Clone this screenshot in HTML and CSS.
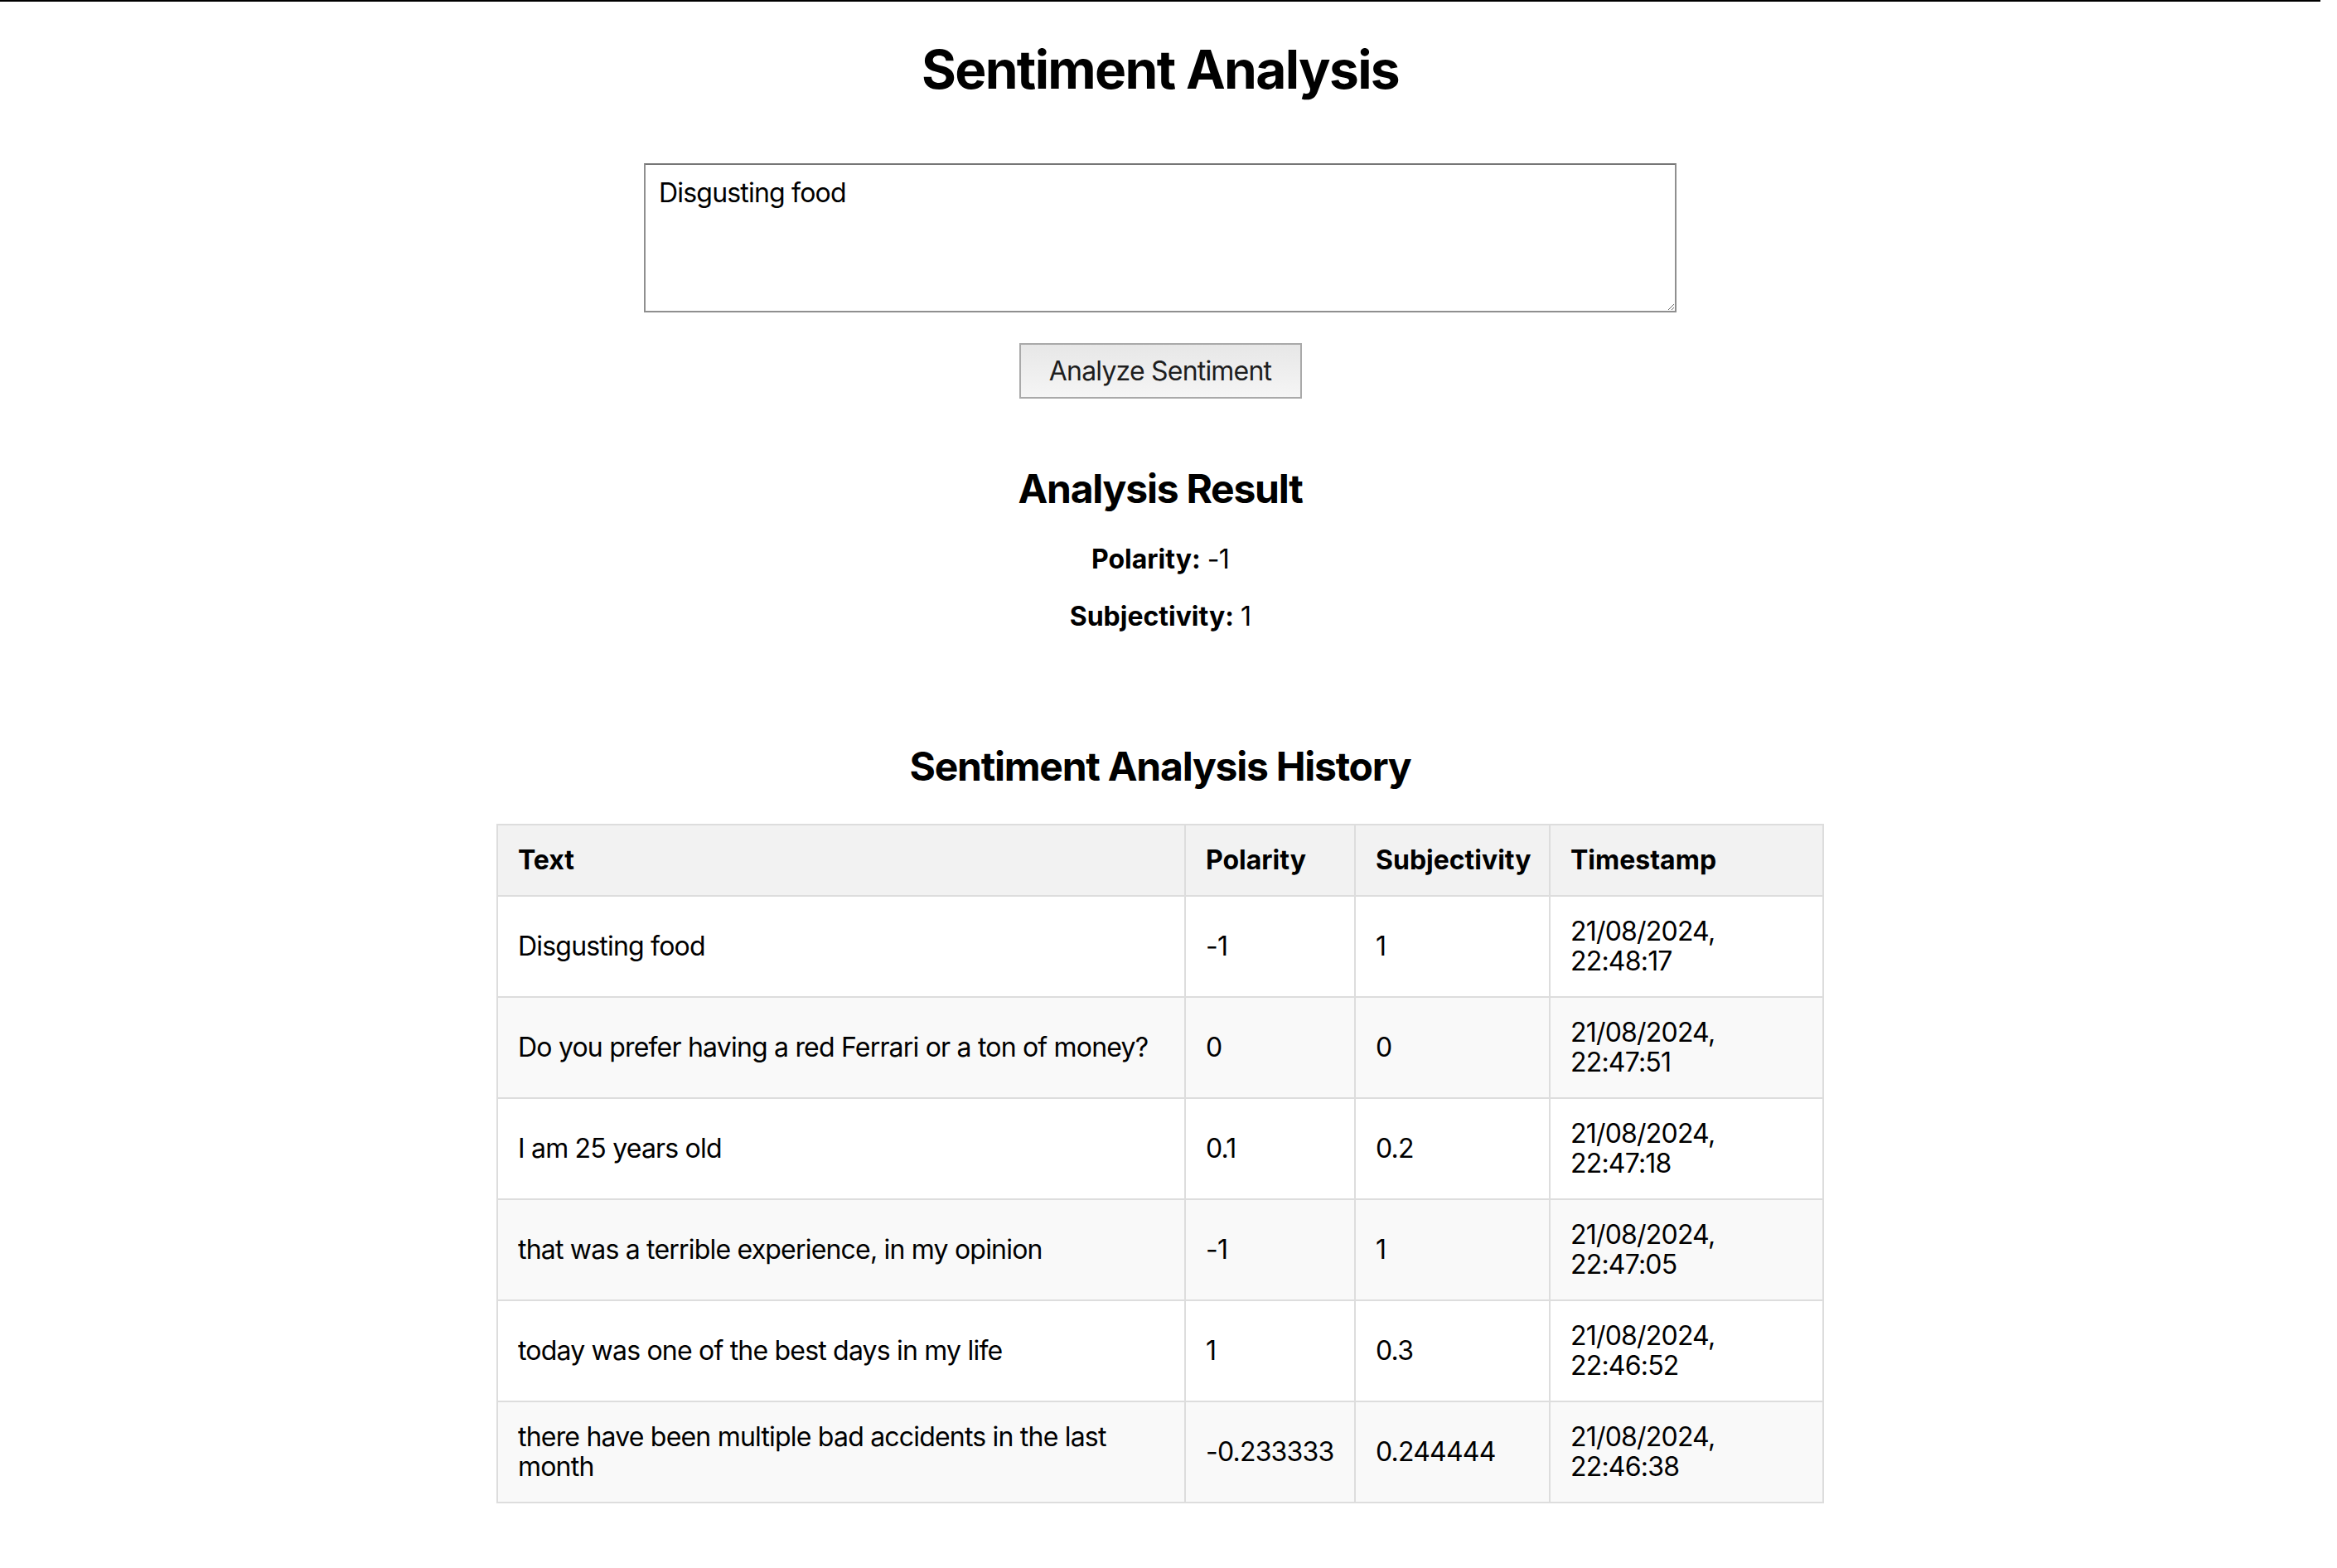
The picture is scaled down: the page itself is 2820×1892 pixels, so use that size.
FILE: index.html
```html
<!DOCTYPE html>
<html lang="en">
<head>
<meta charset="utf-8">
<title>Sentiment Analysis</title>
<link rel="stylesheet" href="styles.css">
</head>
<body>
<main class="page">
  <h1 class="title">Sentiment Analysis</h1>
  <form class="analyze-form">
    <textarea class="text-input">Disgusting food</textarea>
    <button type="button" class="analyze-btn">Analyze Sentiment</button>
  </form>
  <section class="result">
    <h2 class="section-title">Analysis Result</h2>
    <p class="metric metric-first"><strong>Polarity:</strong> -1</p>
    <p class="metric metric-second"><strong>Subjectivity:</strong> 1</p>
  </section>
  <section class="history">
    <h2 class="section-title">Sentiment Analysis History</h2>
    <table class="history-table">
      <colgroup>
        <col class="col-text">
        <col class="col-pol">
        <col class="col-subj">
        <col class="col-time">
      </colgroup>
      <thead>
        <tr><th>Text</th><th>Polarity</th><th>Subjectivity</th><th>Timestamp</th></tr>
      </thead>
      <tbody>
        <tr><td>Disgusting food</td><td>-1</td><td>1</td><td>21/08/2024, 22:48:17</td></tr>
        <tr><td>Do you prefer having a red Ferrari or a ton of money?</td><td>0</td><td>0</td><td>21/08/2024, 22:47:51</td></tr>
        <tr><td>I am 25 years old</td><td>0.1</td><td>0.2</td><td>21/08/2024, 22:47:18</td></tr>
        <tr><td>that was a terrible experience, in my opinion</td><td>-1</td><td>1</td><td>21/08/2024, 22:47:05</td></tr>
        <tr><td>today was one of the best days in my life</td><td>1</td><td>0.3</td><td>21/08/2024, 22:46:52</td></tr>
        <tr><td>there have been multiple bad accidents in the last month</td><td>-0.233333</td><td>0.244444</td><td>21/08/2024, 22:46:38</td></tr>
      </tbody>
    </table>
  </section>
</main>
</body>
</html>
```

FILE: styles.css
```css
html, body {
  margin: 0;
  padding: 0;
  background: #ffffff;
}

body {
  font-family: Inter, "Noto Sans", "Liberation Sans", sans-serif;
  color: #000;
  font-size: 32px;
  letter-spacing: -0.025em;
}

.page {
  width: 2800px;
  border-top: 2px solid #000;
  display: flex;
  flex-direction: column;
  align-items: center;
}

.title {
  margin: 44px 0 0;
  font-size: 64px;
  line-height: 76px;
  font-weight: 700;
  letter-spacing: -0.026em;
}

.analyze-form {
  margin-top: 75px;
  display: flex;
  flex-direction: column;
  align-items: center;
}

.text-input {
  box-sizing: border-box;
  width: 1246px;
  height: 180px;
  padding: 15px 16px 9px;
  margin: 0;
  border: 2px solid #8f8f8f;
  border-top-color: #767676;
  font-family: Inter, "Noto Sans", "Liberation Sans", sans-serif;
  font-size: 32px;
  line-height: 38px;
  letter-spacing: -0.025em;
  color: #000;
  background: #fff;
  border-radius: 0;
  resize: both;
}

.analyze-btn {
  box-sizing: border-box;
  margin-top: 37px;
  width: 341px;
  height: 67px;
  padding: 13px 0 12px;
  border: 2px solid #a9a9a9;
  border-radius: 0;
  background: linear-gradient(#e7e7e7, #f5f5f5);
  font-family: Inter, "Noto Sans", "Liberation Sans", sans-serif;
  font-size: 32px;
  line-height: 38px;
  letter-spacing: -0.025em;
  color: #1e1e1e;
  text-align: center;
}

.result {
  display: flex;
  flex-direction: column;
  align-items: center;
}

.section-title {
  font-size: 48px;
  line-height: 58px;
  font-weight: 700;
  letter-spacing: -0.026em;
  margin: 0;
}

.result .section-title {
  margin-top: 80px;
}

.metric {
  margin: 0;
  font-size: 32px;
  line-height: 38px;
}

.metric-first {
  margin-top: 37px;
}

.metric-second {
  margin-top: 31px;
}

.metric strong {
  font-weight: 700;
  letter-spacing: 0;
}

.history {
  display: flex;
  flex-direction: column;
  align-items: center;
}

.history .section-title {
  margin-top: 133px;
}

.history-table {
  margin-top: 40px;
  width: 1600px;
  table-layout: fixed;
  border-collapse: collapse;
  font-size: 32px;
  line-height: 36px;
}

.col-text { width: 830px; }
.col-pol { width: 205px; }
.col-subj { width: 235px; }
.col-time { width: 330px; }

.history-table th,
.history-table td {
  border: 2px solid #dddddd;
  padding: 24px 24px;
  text-align: left;
  vertical-align: middle;
}

.history-table th {
  background: #f2f2f2;
  font-weight: 700;
  letter-spacing: 0;
}

.history-table tbody tr:nth-child(even) td {
  background: #f9f9f9;
}
```
